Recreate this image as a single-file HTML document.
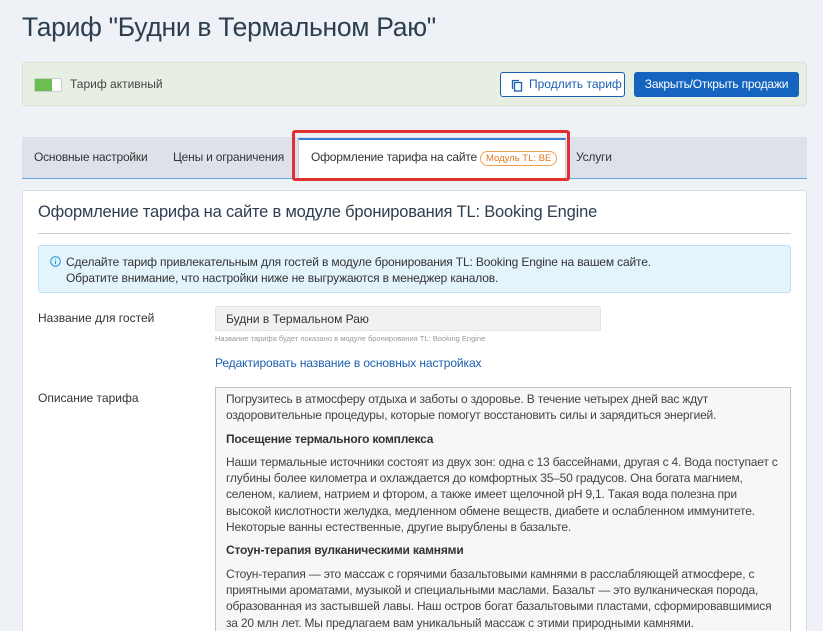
<!DOCTYPE html><html><head><meta charset="utf-8"><style>
*{box-sizing:border-box;margin:0;padding:0}
html,body{width:823px;height:631px;overflow:hidden}
body{background:#eef1f5;font-family:"Liberation Sans",sans-serif;color:#333;position:relative;font-size:12px}
.a{position:absolute;white-space:nowrap}
h1{position:absolute;left:22px;top:12px;font-size:26.5px;font-weight:normal;color:#2c3e50;letter-spacing:-0.3px}
.green{left:22px;top:62px;width:785px;height:44px;background:#e7efe3;border:1px solid #d5e0d0;border-radius:4px}
.tog{left:11px;top:15px;width:28px;height:14px;background:#fff;border:1px solid #ccc;border-radius:2px}
.tog i{position:absolute;left:0;top:0;width:17px;height:12px;background:#6bbf4e}
.btn1{left:477px;top:9px;width:125px;height:25px;border:1px solid #1a5fb0;border-radius:3px;background:#fff;color:#1a5fb0;font-size:12px;line-height:23px;padding-left:28px}
.btn2{left:611px;top:9px;width:165px;height:25px;background:#1565c0;border-radius:3px;color:#fff;line-height:25px;text-align:center;font-size:12px;letter-spacing:-0.2px}
.tabs{left:22px;top:137px;width:785px;height:42px;background:#dde2ea;border-bottom:1px solid #6aa4e0}
.tab{position:absolute;top:13px;font-size:12px;color:#333;letter-spacing:-0.2px}
.act{left:298px;top:138px;width:268px;height:41px;background:#fff;border-top:2px solid #3a7bd5;border-left:1px solid #c8d0da;border-right:1px solid #c8d0da}
.red{left:292px;top:130px;width:278px;height:51px;border:3px solid #e03030;border-radius:3px}
.badge{display:inline-block;border:1px solid #f0a050;color:#e07a20;border-radius:9px;font-size:9.5px;padding:1px 5px;line-height:11px;margin-left:3px;letter-spacing:0}
.card{left:22px;top:190px;width:785px;height:460px;background:#fff;border:1px solid #d8dde3;border-radius:3px}
.info{left:38px;top:245px;width:753px;height:48px;background:#e3f4fc;border:1px solid #b9e3f5;border-radius:3px;padding:8px 0 0 27px;line-height:16px;font-size:12px;letter-spacing:-0.15px}
.inp{left:215px;top:306px;width:386px;height:25px;background:#f0f1f3;border:1px solid #e2e4e7;border-radius:2px;padding:5px 10px;font-size:12px}
.ta{left:215px;top:387px;width:576px;height:260px;background:#f7f7f7;border:1px solid #bfc4ca;padding:3px 10px;line-height:16.3px;font-size:12px;color:#444;white-space:normal;letter-spacing:-0.2px}
.ta p{margin-bottom:7px}.ta b{color:#333}
</style></head><body>
<h1>Тариф "Будни в Термальном Раю"</h1>
<div class="a green"><div class="a tog"><i></i></div><div class="a" style="left:47px;top:14px;color:#444">Тариф активный</div>
<div class="a btn1"><svg class="a" style="left:10px;top:6px" width="12" height="13" viewBox="0 0 12 13"><rect x="3.5" y="3.5" width="7" height="8.5" fill="none" stroke="#1a5fb0" stroke-width="1.3"/><path d="M1.5 10V1.5H8" fill="none" stroke="#1a5fb0" stroke-width="1.3"/></svg>Продлить тариф</div>
<div class="a btn2">Закрыть/Открыть продажи</div></div>
<div class="a tabs"><span class="tab" style="left:12px">Основные настройки</span><span class="tab" style="left:151px">Цены и ограничения</span><span class="tab" style="left:554px">Услуги</span></div>
<div class="a act"><span class="a" style="left:12px;top:10px;letter-spacing:-0.2px">Оформление тарифа на сайте<span class="badge">Модуль TL: BE</span></span></div>
<div class="a red"></div>
<div class="a card"></div>
<div class="a" style="left:38px;top:203px;font-size:16.5px;color:#2c3e50;letter-spacing:-0.2px">Оформление тарифа на сайте в модуле бронирования TL: Booking Engine</div>
<div class="a" style="left:38px;top:233px;width:753px;height:1px;background:#ccc"></div>
<div class="a info"><svg class="a" style="left:11px;top:10px" width="11" height="11" viewBox="0 0 12 12"><circle cx="6" cy="6" r="5.2" fill="none" stroke="#2a9fd6" stroke-width="1.2"/><path d="M6 5v4M6 3v1" stroke="#2a9fd6" stroke-width="1.3"/></svg>Сделайте тариф привлекательным для гостей в модуле бронирования TL: Booking Engine на вашем сайте.<br>Обратите внимание, что настройки ниже не выгружаются в менеджер каналов.</div>
<div class="a" style="left:38px;top:311px">Название для гостей</div>
<div class="a inp">Будни в Термальном Раю</div>
<div class="a" style="left:215px;top:334px;font-size:7.5px;color:#999">Название тарифа будет показано в модуле бронирования TL: Booking Engine</div>
<div class="a" style="left:215px;top:356px;color:#1a5fb0;letter-spacing:-0.1px">Редактировать название в основных настройках</div>
<div class="a" style="left:38px;top:391px">Описание тарифа</div>
<div class="a ta"><p>Погрузитесь в атмосферу отдыха и заботы о здоровье. В течение четырех дней вас ждут оздоровительные процедуры, которые помогут восстановить силы и зарядиться энергией.</p>
<p><b>Посещение термального комплекса</b></p>
<p>Наши термальные источники состоят из двух зон: одна с 13 бассейнами, другая с 4. Вода поступает с глубины более километра и охлаждается до комфортных 35–50 градусов. Она богата магнием, селеном, калием, натрием и фтором, а также имеет щелочной pH 9,1. Такая вода полезна при высокой кислотности желудка, медленном обмене веществ, диабете и ослабленном иммунитете. Некоторые ванны естественные, другие вырублены в базальте.</p>
<p><b>Стоун-терапия вулканическими камнями</b></p>
<p>Стоун-терапия — это массаж с горячими базальтовыми камнями в расслабляющей атмосфере, с приятными ароматами, музыкой и специальными маслами. Базальт — это вулканическая порода, образованная из застывшей лавы. Наш остров богат базальтовыми пластами, сформировавшимися за 20 млн лет. Мы предлагаем вам уникальный массаж с этими природными камнями.</p></div>
</body></html>
